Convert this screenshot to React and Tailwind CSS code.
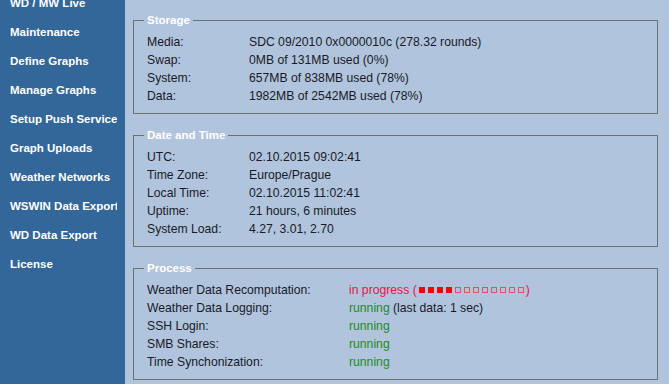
import React from "react";

const menu = [
  "WD / MW Live",
  "Maintenance",
  "Define Graphs",
  "Manage Graphs",
  "Setup Push Service",
  "Graph Uploads",
  "Weather Networks",
  "WSWIN Data Export",
  "WD Data Export",
  "License",
];

const storage = [
  ["Media:", "SDC 09/2010 0x0000010c (278.32 rounds)"],
  ["Swap:", "0MB of 131MB used (0%)"],
  ["System:", "657MB of 838MB used (78%)"],
  ["Data:", "1982MB of 2542MB used (78%)"],
];

const dateTime = [
  ["UTC:", "02.10.2015 09:02:41"],
  ["Time Zone:", "Europe/Prague"],
  ["Local Time:", "02.10.2015 11:02:41"],
  ["Uptime:", "21 hours, 6 minutes"],
  ["System Load:", "4.27, 3.01, 2.70"],
];

function Box({ title, children }) {
  // fieldset with the legend sitting on the top border
  return (
    <fieldset className="w-[525px] border border-[#6f6f6f] px-[10px] pb-[8px] mb-[14px]">
      <legend className="px-[3px] text-[11.5px] leading-[14px] font-bold text-white">
        {title}
      </legend>
      <div className="pt-[6px] pl-[3px]">{children}</div>
    </fieldset>
  );
}

function Rows({ rows, labelW }) {
  return (
    <div className="flex flex-col">
      {rows.map(([k, v]) => (
        <div key={k} className="flex h-[18px] items-center whitespace-nowrap">
          <span className={labelW}>{k}</span>
          <span>{v}</span>
        </div>
      ))}
    </div>
  );
}

function Progress({ done, total }) {
  const cells = [];
  for (let i = 0; i < total; i++) {
    cells.push(
      <span
        key={i}
        className={
          i < done
            ? "inline-block w-[6px] h-[6px] bg-[#ff0000]"
            : "inline-block w-[6px] h-[6px] border border-[#f24a5a]"
        }
      />
    );
  }
  return (
    <span className="inline-flex items-center gap-[3px] mx-[2px]">{cells}</span>
  );
}

export default function App() {
  const label = "w-[202px] shrink-0";
  const running = <span className="text-[#1f8a1f]">running</span>;

  return (
    <div
      className="flex h-screen w-full overflow-hidden bg-[#b0c4de] text-[12.2px] text-[#1a1a26]"
      style={{ fontFamily: '"Liberation Sans", Arial, sans-serif' }}
    >
      {/* Sidebar */}
      <div className="w-[125px] shrink-0 bg-[#336699] overflow-hidden">
        <ul className="-mt-[11px]">
          {menu.map((m) => (
            <li
              key={m}
              className="h-[29px] flex items-center pl-[10px] text-[11.5px] font-bold text-white whitespace-nowrap overflow-hidden w-[117px]"
            >
              {m}
            </li>
          ))}
        </ul>
      </div>

      {/* Content */}
      <div className="flex-1 pl-[8px] pt-[13px]">
        <Box title="Storage">
          <Rows rows={storage} labelW="w-[102px] shrink-0" />
        </Box>
        <Box title="Date and Time">
          <Rows rows={dateTime} labelW="w-[102px] shrink-0" />
        </Box>
        <Box title="Process">
          <div className="flex flex-col">
            <div className="flex h-[18px] items-center whitespace-nowrap">
              <span className={label}>Weather Data Recomputation:</span>
              <span className="text-[#ee1144] flex items-center">
                in progress (
                <Progress done={4} total={12} />)
              </span>
            </div>
            <div className="flex h-[18px] items-center whitespace-nowrap">
              <span className={label}>Weather Data Logging:</span>
              <span>
                {running} (last data: 1 sec)
              </span>
            </div>
            <div className="flex h-[18px] items-center whitespace-nowrap">
              <span className={label}>SSH Login:</span>
              {running}
            </div>
            <div className="flex h-[18px] items-center whitespace-nowrap">
              <span className={label}>SMB Shares:</span>
              {running}
            </div>
            <div className="flex h-[18px] items-center whitespace-nowrap">
              <span className={label}>Time Synchonization:</span>
              {running}
            </div>
          </div>
        </Box>
      </div>
    </div>
  );
}
